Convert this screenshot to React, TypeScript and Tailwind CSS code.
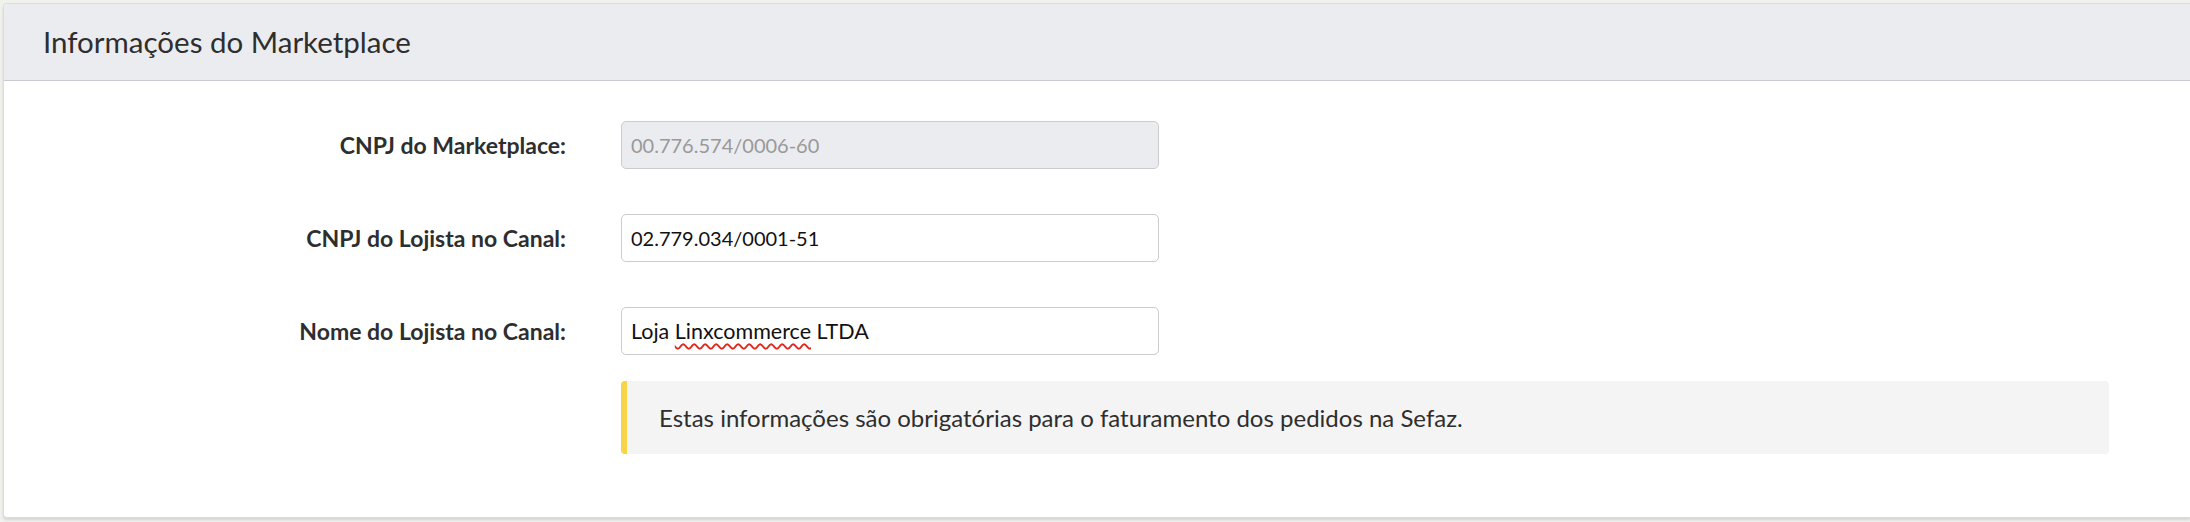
import React from "react";

const font = { fontFamily: "Lato, 'Noto Sans', sans-serif" };

function Row({ label, children }: { label: string; children: React.ReactNode }) {
  return (
    <div className="flex items-center">
      <div className="w-[562px] shrink-0 text-right text-[23px] font-bold text-[#2e2e2e]">{label}</div>
      <div className="ml-[55px] w-[538px]">{children}</div>
    </div>
  );
}

export default function App() {
  return (
    <div className="w-[2190px] h-[522px] bg-[#f1f1ee] pt-[3px] pl-[3px] overflow-hidden" style={font}>
      <div className="h-[515px] bg-white border-l border-t border-b border-[#dcdcdc] rounded-l-[4px] shadow-[0_2px_3px_rgba(0,0,0,0.12)] flex flex-col">
        <div className="h-[77px] bg-[#ebecf0] border-b border-[#c9cad2] rounded-tl-[4px] flex items-center pl-[39px]">
          <h2 className="text-[29.5px] font-normal text-[#2e2e2e] leading-none">Informações do Marketplace</h2>
        </div>
        <div className="pt-[40px] flex flex-col gap-[45px]">
          <Row label="CNPJ do Marketplace:">
            <input
              disabled
              value="00.776.574/0006-60"
              readOnly
              className="w-full h-[48px] rounded-[5px] border border-[#cccccc] bg-[#ebecf0] px-[9px] text-[20px] text-[#999999] outline-none"
              style={font}
            />
          </Row>
          <Row label="CNPJ do Lojista no Canal:">
            <input
              value="02.779.034/0001-51"
              readOnly
              className="w-full h-[48px] rounded-[5px] border border-[#cccccc] bg-white px-[9px] text-[20px] text-[#111111] outline-none"
              style={font}
            />
          </Row>
          <Row label="Nome do Lojista no Canal:">
            <div className="w-full h-[48px] rounded-[5px] border border-[#cccccc] bg-white px-[9px] text-[21.5px] text-[#111111] flex items-center">
              <span>
                Loja{" "}
                <span className="underline decoration-wavy decoration-[#e0281e] decoration-[1.5px] underline-offset-[4px]">
                  Linxcommerce
                </span>{" "}
                LTDA
              </span>
            </div>
          </Row>
        </div>
        <div className="mt-[26px] ml-[617px] w-[1488px] h-[73px] bg-[#f4f4f4] border-l-[6px] border-[#f8d447] rounded-[4px] flex items-center pl-[32px]">
          <p className="text-[24px] text-[#2e2e2e]">
            Estas informações são obrigatórias para o faturamento dos pedidos na Sefaz.
          </p>
        </div>
      </div>
    </div>
  );
}
